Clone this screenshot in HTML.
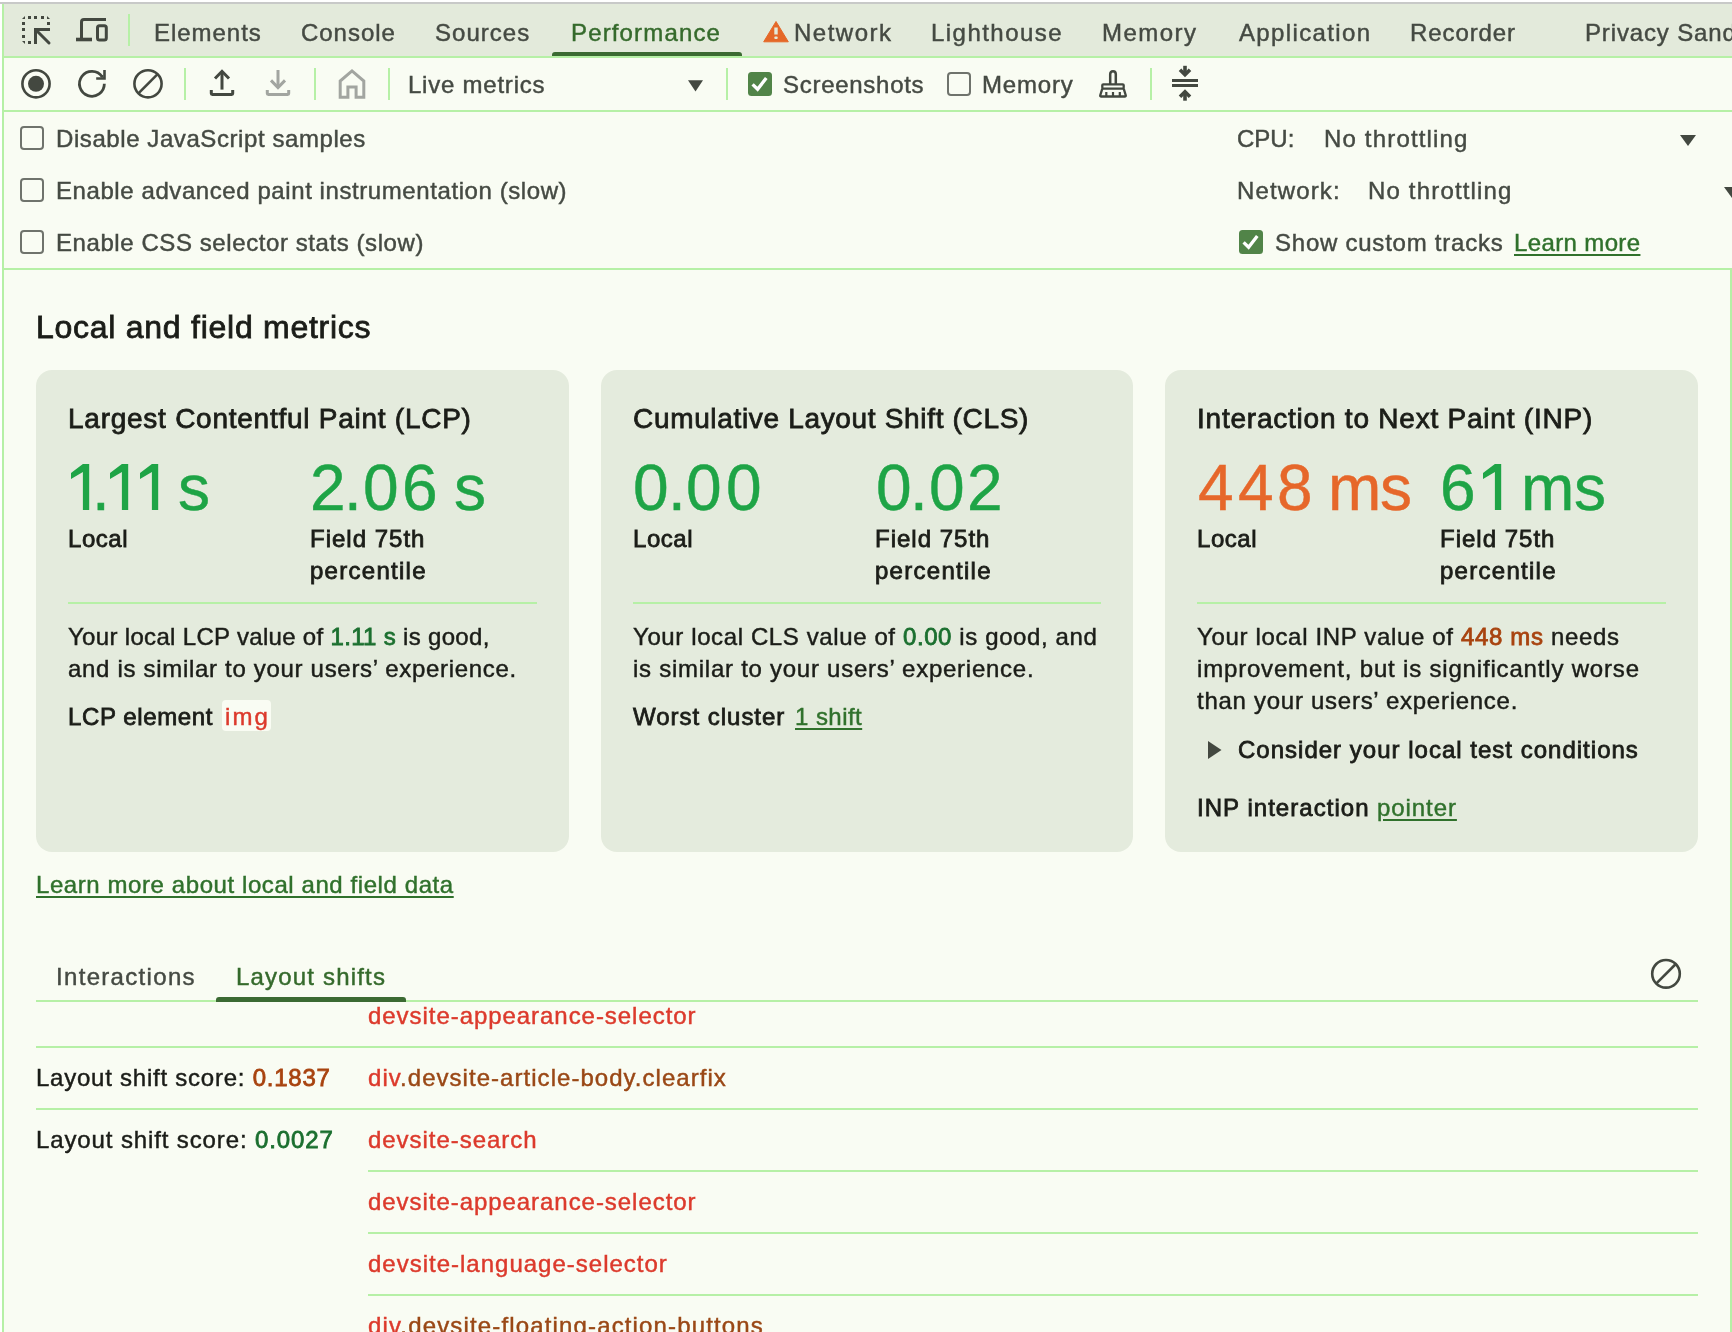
<!DOCTYPE html>
<html><head><meta charset="utf-8">
<style>
*{margin:0;padding:0;box-sizing:border-box}
html,body{width:1732px;height:1332px;overflow:hidden;background:#fff;font-family:"Liberation Sans",sans-serif}
.a{position:absolute;white-space:nowrap;-webkit-text-stroke:0.45px currentColor;will-change:transform}
.bg{position:absolute}
.s24{font-size:24px;line-height:24px}
.s28{font-size:28px;line-height:28px}
.s32{font-size:32px;line-height:32px}
.s64{font-size:64px;line-height:64px}
.tab{color:#454a43}
.tb{color:#454a43}
.bd{color:#1b1d18}
.lk{color:#30712c;text-decoration:underline;text-decoration-thickness:2px;text-underline-offset:3px}
.good{color:#1ea446}
.ni{color:#e6672a}
.goodd{color:#1b6f2f}
.nid{color:#a8430f}
.tag{color:#dc3a2c}
.attr{color:#9a4816}
.hl{position:absolute;height:2px;background:#b6f0a6}
.vl{position:absolute;width:2px;background:#b6f0a6}
svg{position:absolute;overflow:visible}
.card{background:#e4ebdd;border-radius:16px}
.md{-webkit-text-stroke:0.8px currentColor}
</style></head><body>
<!-- frame -->
<div class="bg" style="left:0;top:2px;width:1732px;height:2px;background:#c8c9c8"></div>
<div class="bg" style="left:2px;top:4px;width:2px;height:1328px;background:#b6f0a6"></div>
<!-- tab bar -->
<div class="bg" style="left:4px;top:4px;width:1728px;height:52px;background:#e3eadb"></div>
<div class="hl" style="left:4px;top:56px;width:1728px"></div>
<!-- toolbar -->
<div class="bg" style="left:4px;top:58px;width:1728px;height:52px;background:#f9fcf3"></div>
<div class="hl" style="left:4px;top:110px;width:1728px"></div>
<!-- settings -->
<div class="bg" style="left:4px;top:112px;width:1728px;height:156px;background:#f9fcf3"></div>
<div class="hl" style="left:4px;top:268px;width:1728px"></div>
<!-- main -->
<div class="bg" style="left:4px;top:270px;width:1726px;height:1062px;background:#f9fcf3"></div>
<div class="vl" style="left:1730px;top:268px;height:1064px"></div>

<!-- tab bar content -->
<svg style="left:22px;top:16px" width="28" height="28" viewBox="0 0 28 28" fill="#434840">
<path d="M0 3 L3 0 V3 Z"/><rect x="6" y="0" width="3" height="3"/><rect x="12" y="0" width="3" height="3"/><rect x="19" y="0" width="3" height="3"/><path d="M25 0 L28 3 H25 Z"/>
<rect x="0" y="6" width="3" height="3"/><rect x="0" y="12" width="3" height="3"/><rect x="0" y="19" width="3" height="3"/><path d="M0 25 H3 V28 Z"/>
<rect x="25" y="6" width="3" height="3"/><rect x="6" y="25" width="3" height="3"/>
<rect x="12" y="12" width="3" height="16"/><rect x="12" y="12" width="16" height="3"/>
<path d="M14 14 L27 27" stroke="#434840" stroke-width="3" stroke-linecap="round"/>
</svg>
<svg style="left:76px;top:17px" width="32" height="26" viewBox="0 0 32 26" fill="none" stroke="#434840" stroke-width="3">
<path d="M30 2.5 H8 Q5.5 2.5 5.5 5 V22"/>
<path d="M0 22.5 H16" stroke-width="3.6"/>
<rect x="21.5" y="8.7" width="8.8" height="14.3" rx="2"/>
</svg>
<div class="vl" style="left:128px;top:14px;height:32px"></div>
<div class="a s24 tab" style="left:154px;top:20.7px;letter-spacing:0.96px">Elements</div>
<div class="a s24 tab" style="left:301px;top:20.7px;letter-spacing:0.97px">Console</div>
<div class="a s24 tab" style="left:435px;top:20.7px;letter-spacing:1.03px">Sources</div>
<div class="a s24 tab" style="left:571px;top:20.7px;color:#356a2c;letter-spacing:1.15px">Performance</div>
<div class="bg" style="left:552px;top:52px;width:190px;height:4px;background:#3b6a32;border-radius:3px 3px 0 0"></div>
<svg style="left:763px;top:21px" width="26" height="21" viewBox="0 0 26 21">
<path d="M13 0.5 L25.3 20.8 H0.7 Z" fill="#e56828" stroke="#e56828" stroke-width="1" stroke-linejoin="round"/>
<rect x="11.3" y="6.5" width="3.4" height="7" fill="#e3eadb"/><rect x="11.3" y="15.4" width="3.4" height="2.6" rx="1" fill="#e3eadb"/>
</svg>
<div class="a s24 tab" style="left:794px;top:20.7px;letter-spacing:1.5px">Network</div>
<div class="a s24 tab" style="left:931px;top:20.7px;letter-spacing:1.46px">Lighthouse</div>
<div class="a s24 tab" style="left:1102px;top:20.7px;letter-spacing:1.48px">Memory</div>
<div class="a s24 tab" style="left:1238.5px;top:20.7px;letter-spacing:1.36px">Application</div>
<div class="a s24 tab" style="left:1410px;top:20.7px;letter-spacing:0.9px">Recorder</div>
<div class="a s24 tab" style="left:1584.5px;top:20.7px;letter-spacing:0.85px">Privacy Sandbox</div>

<!-- toolbar content -->
<svg style="left:20px;top:68px" width="32" height="32" viewBox="0 0 32 32">
<circle cx="16" cy="15.8" r="13.6" fill="none" stroke="#434840" stroke-width="2.6"/>
<circle cx="16" cy="15.8" r="8" fill="#434840"/>
</svg>
<svg style="left:76px;top:68px" width="32" height="32" viewBox="0 0 32 32" fill="none" stroke="#434840" stroke-width="2.8">
<path d="M28.35 15.8 A12.45 12.45 0 1 1 26.2 8.8"/>
<path d="M28.5 2 V10.5 H20.2" stroke-width="2.6" stroke-linejoin="miter"/>
<path d="M24.8 7.2 H27.4 V9.6 H24.8 Z" fill="#434840" stroke="none"/>
</svg>
<svg style="left:132px;top:68px" width="32" height="32" viewBox="0 0 32 32" fill="none" stroke="#434840" stroke-width="2.6">
<circle cx="16" cy="15.8" r="13.6"/>
<path d="M25.6 6.2 L6.4 25.4"/>
</svg>
<div class="vl" style="left:184px;top:68px;height:32px"></div>
<svg style="left:208px;top:68px" width="28" height="30" viewBox="0 0 28 30" fill="none" stroke="#434840" stroke-width="3">
<path d="M14 4 V21.6"/>
<path d="M7 10.5 L14 3.3 L21 10.5" stroke-linejoin="miter"/>
<path d="M3.3 22 V25.5 Q3.3 26.4 4.3 26.4 H23.7 Q24.7 26.4 24.7 25.5 V22"/>
</svg>
<svg style="left:264px;top:68px" width="28" height="30" viewBox="0 0 28 30" fill="none" stroke="#a2a5a0" stroke-width="3">
<path d="M14 2 V19.5"/>
<path d="M7 12.4 L14 19.6 L21 12.4" stroke-linejoin="miter"/>
<path d="M3.3 22 V25.5 Q3.3 26.4 4.3 26.4 H23.7 Q24.7 26.4 24.7 25.5 V22"/>
</svg>
<div class="vl" style="left:314px;top:68px;height:32px"></div>
<svg style="left:336px;top:66px" width="32" height="34" viewBox="0 0 32 34" fill="none" stroke="#a2a5a0" stroke-width="3">
<path d="M4.2 31.3 V15 L16 4.9 L27.8 15 V31.3 H20.1 V21.1 H11.9 V31.3 Z" stroke-linejoin="miter"/>
</svg>
<div class="vl" style="left:388px;top:68px;height:32px"></div>
<div class="a s24 tb" style="left:408px;top:72.7px;letter-spacing:0.77px">Live metrics</div>
<svg style="left:688.3px;top:79.6px" width="15" height="11.5" viewBox="0 0 16 12"><path d="M0 0 H16 L8 12 Z" fill="#434840"/></svg>
<div class="vl" style="left:726px;top:68px;height:32px"></div>
<svg style="left:748px;top:72px" width="24" height="24" viewBox="0 0 24 24">
<rect x="0" y="0" width="24" height="24" rx="3.5" fill="#518448"/>
<path d="M4.6 12.4 L9.6 17.3 L18.3 5.9" fill="none" stroke="#fff" stroke-width="3.3"/>
</svg>
<div class="a s24 tb" style="left:783px;top:72.7px;letter-spacing:0.72px">Screenshots</div>
<div class="bg" style="left:947px;top:72px;width:24px;height:24px;border:2px solid #6f736c;border-radius:4px"></div>
<div class="a s24 tb" style="left:982px;top:72.7px;letter-spacing:0.82px">Memory</div>
<svg style="left:1097px;top:68px" width="32" height="32" viewBox="0 0 32 32" fill="none" stroke="#434840" stroke-width="2.3">
<path d="M13.2 16.3 V6.3 Q13.2 3.2 16 3.2 Q18.8 3.2 18.8 6.3 V16.3" stroke-width="2.5"/>
<rect x="5.3" y="16.3" width="21.4" height="4.3" rx="1"/>
<path d="M5.3 20.6 L3.2 27.5 Q3 28.5 4.2 28.5 H27.8 Q29 28.5 28.8 27.5 L26.7 20.6"/>
<path d="M9.3 23.9 V28.5 M16 23.9 V28.5 M22.8 23.9 V28.5" stroke-width="2.2"/>
</svg>
<div class="vl" style="left:1150px;top:68px;height:32px"></div>
<svg style="left:1170px;top:64px" width="30" height="38" viewBox="0 0 30 38" fill="#434840">
<rect x="2" y="15" width="26" height="3"/><rect x="2" y="20" width="26" height="3"/>
<rect x="13.2" y="1.8" width="3.6" height="9"/><path d="M10 5.8 L15 10.8 L20 5.8" fill="none" stroke="#434840" stroke-width="3.6"/>
<rect x="13.2" y="28" width="3.6" height="8.7"/><path d="M10 32.75 L15 27.75 L20 32.75" fill="none" stroke="#434840" stroke-width="3.6"/>
</svg>

<!-- settings content -->
<div class="bg" style="left:20px;top:126px;width:24px;height:24px;border:2px solid #6f736c;border-radius:4px"></div>
<div class="a s24 tb" style="left:56px;top:126.7px;letter-spacing:0.58px">Disable JavaScript samples</div>
<div class="bg" style="left:20px;top:178px;width:24px;height:24px;border:2px solid #6f736c;border-radius:4px"></div>
<div class="a s24 tb" style="left:56px;top:178.7px;letter-spacing:0.58px">Enable advanced paint instrumentation (slow)</div>
<div class="bg" style="left:20px;top:230px;width:24px;height:24px;border:2px solid #6f736c;border-radius:4px"></div>
<div class="a s24 tb" style="left:56px;top:230.7px;letter-spacing:0.58px">Enable CSS selector stats (slow)</div>
<div class="a s24 tb" style="left:1237px;top:126.7px">CPU:</div>
<div class="a s24 tb" style="left:1324px;top:126.7px;letter-spacing:1.17px">No throttling</div>
<svg style="left:1680px;top:135px" width="16" height="11" viewBox="0 0 16 11"><path d="M0 0 H16 L8 11 Z" fill="#434840"/></svg>
<div class="a s24 tb" style="left:1237px;top:178.7px;letter-spacing:1.14px">Network:</div>
<div class="a s24 tb" style="left:1368px;top:178.7px;letter-spacing:1.17px">No throttling</div>
<svg style="left:1724px;top:187px" width="16" height="11" viewBox="0 0 16 11"><path d="M0 0 H16 L8 11 Z" fill="#434840"/></svg>
<svg style="left:1239px;top:230px" width="24" height="24" viewBox="0 0 24 24">
<rect x="0" y="0" width="24" height="24" rx="3.5" fill="#518448"/>
<path d="M4.6 12.4 L9.6 17.3 L18.3 5.9" fill="none" stroke="#fff" stroke-width="3.3"/>
</svg>
<div class="a s24 tb" style="left:1275px;top:230.7px;letter-spacing:0.76px">Show custom tracks</div>
<div class="a s24 lk" style="left:1514px;top:230.7px;letter-spacing:0.37px">Learn more</div>

<!-- main content -->
<div class="a s32 bd md" style="left:36px;top:310.7px;letter-spacing:0.736px">Local and field metrics</div>
<div class="bg card" style="left:36px;top:370px;width:533px;height:482px"></div>
<div class="bg card" style="left:601px;top:370px;width:532px;height:482px"></div>
<div class="bg card" style="left:1165px;top:370px;width:533px;height:482px"></div>
<!-- big numbers -->
<svg style="left:71.1px;top:463.9px" width="18.2" height="46" viewBox="0 0 18.2 46"><path d="M0 9.1 L11.9 0 H18.2 V46 H11.9 V7.9 L0 14.9 Z" fill="#1ea446"/></svg>
<div class="a s64 good" style="left:92.3px;top:455.8px">.</div>
<svg style="left:110.4px;top:463.9px" width="18.2" height="46" viewBox="0 0 18.2 46"><path d="M0 9.1 L11.9 0 H18.2 V46 H11.9 V7.9 L0 14.9 Z" fill="#1ea446"/></svg>
<svg style="left:140.3px;top:463.9px" width="18.2" height="46" viewBox="0 0 18.2 46"><path d="M0 9.1 L11.9 0 H18.2 V46 H11.9 V7.9 L0 14.9 Z" fill="#1ea446"/></svg>
<div class="a s64 good" style="left:178.1px;top:455.8px">s</div>
<div class="a s64 good" style="left:310.1px;top:455.8px">2</div>
<div class="a s64 good" style="left:344.3px;top:455.8px">.</div>
<div class="a s64 good" style="left:362.9px;top:455.8px">0</div>
<div class="a s64 good" style="left:401.9px;top:455.8px">6</div>
<div class="a s64 good" style="left:453.6px;top:455.8px">s</div>
<div class="a s64 good" style="left:633.4px;top:455.8px">0</div>
<div class="a s64 good" style="left:667.8px;top:455.8px">.</div>
<div class="a s64 good" style="left:686.1px;top:455.8px">0</div>
<div class="a s64 good" style="left:726.0px;top:455.8px">0</div>
<div class="a s64 good" style="left:875.8px;top:455.8px">0</div>
<div class="a s64 good" style="left:910.3px;top:455.8px">.</div>
<div class="a s64 good" style="left:928.6px;top:455.8px">0</div>
<div class="a s64 good" style="left:966.5px;top:455.8px">2</div>
<div class="a s64 ni" style="left:1198.3px;top:455.8px">4</div>
<div class="a s64 ni" style="left:1237.7px;top:455.8px">4</div>
<div class="a s64 ni" style="left:1276.5px;top:455.8px">8</div>
<div class="a s64 ni" style="left:1327.5px;top:455.8px">m</div>
<div class="a s64 ni" style="left:1379.7px;top:455.8px">s</div>
<div class="a s64 good" style="left:1439.7px;top:455.8px">6</div>
<svg style="left:1483.3px;top:463.9px" width="18.2" height="46" viewBox="0 0 18.2 46"><path d="M0 9.1 L11.9 0 H18.2 V46 H11.9 V7.9 L0 14.9 Z" fill="#1ea446"/></svg>
<div class="a s64 good" style="left:1521.3px;top:455.8px">m</div>
<div class="a s64 good" style="left:1573.6px;top:455.8px">s</div>
<!-- card 1 -->
<div class="a s28 bd md" style="left:68px;top:404.5px;letter-spacing:0.745px">Largest Contentful Paint (LCP)</div>
<div class="a s24 bd md" style="left:68px;top:526.7px;letter-spacing:0.55px">Local</div>
<div class="a s24 bd md" style="left:310px;top:526.7px;letter-spacing:1.0px">Field 75th</div>
<div class="a s24 bd md" style="left:310px;top:558.7px;letter-spacing:1.27px">percentile</div>
<div class="hl" style="left:68px;top:602px;width:469px"></div>
<div class="a s24 bd" style="left:68px;top:624.7px;letter-spacing:0.32px">Your local LCP value of <span class="goodd md">1.11 s</span> is good,</div>
<div class="a s24 bd" style="left:68px;top:656.7px;letter-spacing:0.69px">and is similar to your users’ experience.</div>
<div class="a s24 bd md" style="left:68px;top:704.5px;letter-spacing:0.6px">LCP element</div>
<div class="bg" style="left:222px;top:700px;width:49px;height:31px;background:#f9fcf3;border-radius:4px"></div>
<div class="a s24 tag" style="left:225px;top:704.5px;letter-spacing:2.1px">img</div>
<!-- card 2 -->
<div class="a s28 bd md" style="left:633px;top:404.5px;letter-spacing:0.671px">Cumulative Layout Shift (CLS)</div>
<div class="a s24 bd md" style="left:633px;top:526.7px;letter-spacing:0.55px">Local</div>
<div class="a s24 bd md" style="left:875px;top:526.7px;letter-spacing:1.0px">Field 75th</div>
<div class="a s24 bd md" style="left:875px;top:558.7px;letter-spacing:1.27px">percentile</div>
<div class="hl" style="left:633px;top:602px;width:468px"></div>
<div class="a s24 bd" style="left:633px;top:624.7px;letter-spacing:0.61px">Your local CLS value of <span class="goodd md">0.00</span> is good, and</div>
<div class="a s24 bd" style="left:633px;top:656.7px;letter-spacing:0.74px">is similar to your users’ experience.</div>
<div class="a s24 bd md" style="left:633px;top:704.7px;letter-spacing:0.98px">Worst cluster</div>
<div class="a s24 lk" style="left:795px;top:704.7px;letter-spacing:0.45px">1 shift</div>
<!-- card 3 -->
<div class="a s28 bd md" style="left:1197px;top:404.5px;letter-spacing:0.777px">Interaction to Next Paint (INP)</div>
<div class="a s24 bd md" style="left:1197px;top:526.7px;letter-spacing:0.55px">Local</div>
<div class="a s24 bd md" style="left:1440px;top:526.7px;letter-spacing:1.0px">Field 75th</div>
<div class="a s24 bd md" style="left:1440px;top:558.7px;letter-spacing:1.27px">percentile</div>
<div class="hl" style="left:1197px;top:602px;width:469px"></div>
<div class="a s24 bd" style="left:1197px;top:624.7px;letter-spacing:0.66px">Your local INP value of <span class="nid md">448 ms</span> needs</div>
<div class="a s24 bd" style="left:1197px;top:656.7px;letter-spacing:0.82px">improvement, but is significantly worse</div>
<div class="a s24 bd" style="left:1197px;top:688.7px;letter-spacing:0.73px">than your users’ experience.</div>
<svg style="left:1208px;top:740.5px" width="14" height="18" viewBox="0 0 14 18"><path d="M0 0 L13.5 9 L0 18 Z" fill="#434840"/></svg>
<div class="a s24 bd md" style="left:1238px;top:738.4px;letter-spacing:1.01px">Consider your local test conditions</div>
<div class="a s24 bd md" style="left:1197px;top:796.1px;letter-spacing:1.04px">INP interaction</div>
<div class="a s24 lk" style="left:1377px;top:796.1px;letter-spacing:0.93px">pointer</div>
<div class="a s24 lk" style="left:36px;top:872.5px;letter-spacing:0.58px">Learn more about local and field data</div>
<!-- tabs -->
<div class="a s24 tab" style="left:56px;top:964.7px;letter-spacing:1.32px">Interactions</div>
<div class="a s24 tab" style="left:236px;top:964.7px;letter-spacing:1.18px;color:#356a2c">Layout shifts</div>
<div class="hl" style="left:36px;top:1000px;width:1662px"></div>
<div class="bg" style="left:216px;top:997px;width:190px;height:5px;background:#3b6a32;border-radius:3px 3px 0 0"></div>
<svg style="left:1648px;top:957px" width="36" height="34" viewBox="0 0 36 34" fill="none" stroke="#434840" stroke-width="2.6">
<circle cx="18" cy="16.8" r="13.8"/><path d="M27.8 7 L8.2 26.6"/>
</svg>
<!-- rows -->
<div class="a s24 tag" style="left:368px;top:1004.2px;letter-spacing:0.95px">devsite-appearance-selector</div>
<div class="hl" style="left:36px;top:1046px;width:1662px"></div>
<div class="a s24 bd" style="left:36px;top:1066.2px;letter-spacing:0.76px">Layout shift score: <span class="nid md">0.1837</span></div>
<div class="a s24 " style="left:368px;top:1066.2px;letter-spacing:1.04px"><span class="tag">div</span><span class="attr">.devsite-article-body.clearfix</span></div>
<div class="hl" style="left:36px;top:1108px;width:1662px"></div>
<div class="a s24 bd" style="left:36px;top:1128.2px;letter-spacing:0.88px">Layout shift score: <span class="goodd md">0.0027</span></div>
<div class="a s24 tag" style="left:368px;top:1128.2px;letter-spacing:0.96px">devsite-search</div>
<div class="hl" style="left:368px;top:1170px;width:1330px"></div>
<div class="a s24 tag" style="left:368px;top:1190.2px;letter-spacing:0.95px">devsite-appearance-selector</div>
<div class="hl" style="left:368px;top:1232px;width:1330px"></div>
<div class="a s24 tag" style="left:368px;top:1252.2px;letter-spacing:1.0px">devsite-language-selector</div>
<div class="hl" style="left:368px;top:1294px;width:1330px"></div>
<div class="a s24 " style="left:368px;top:1314.2px;letter-spacing:1.15px"><span class="tag">div</span><span class="attr">.devsite-floating-action-buttons</span></div>
</body></html>
